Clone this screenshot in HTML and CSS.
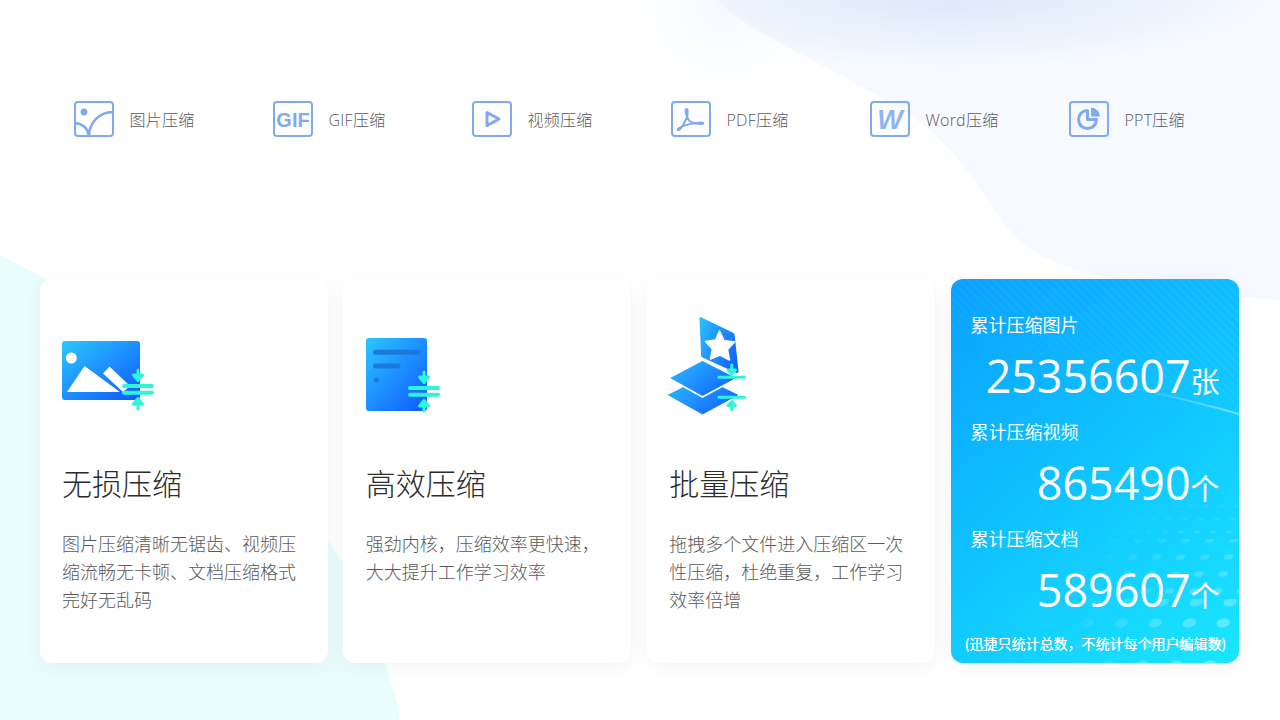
FILE: index.html
```html
<!DOCTYPE html>
<html lang="zh-CN">
<head>
<meta charset="utf-8">
<title>压缩</title>
<link rel="stylesheet" href="styles.css">
</head>
<body>
<svg class="backdrop" viewBox="0 0 1280 720" width="1280" height="720" aria-hidden="true">
  <defs>
    <radialGradient id="skyTop" cx="950" cy="-10" r="320" gradientUnits="userSpaceOnUse" gradientTransform="translate(950 -10) scale(1 .24) translate(-950 10)">
      <stop offset="0" stop-color="#d8e7f8"/>
      <stop offset=".5" stop-color="#e8f0fb"/>
      <stop offset="1" stop-color="#f6f9ff"/>
    </radialGradient>
    <radialGradient id="skyFade" cx="725" cy="0" r="100" gradientUnits="userSpaceOnUse">
      <stop offset="0" stop-color="#f5f9fe"/>
      <stop offset="1" stop-color="#ffffff"/>
    </radialGradient>
  </defs>
  <rect x="600" y="0" width="250" height="120" fill="url(#skyFade)"/>
  <path d="M717 0C745 28 780 42 864 88C900 108 925 122 950 150C975 178 990 205 1007 227C1025 252 1060 268 1109 278C1160 290 1220 296 1280 300V0Z" fill="url(#skyTop)"/>
  <path d="M0 255L45 278L328 540L343 563C365 610 392 670 400 720H0Z" fill="#e9fefc"/>
</svg>

<main class="page">
  <nav class="tools">
    <a class="tool">
      <svg class="tool-icon" viewBox="0 0 40 36"><rect x="1" y="1" width="38" height="34" rx="3" class="ln"/><circle cx="10" cy="11" r="3.4" class="fl"/><path d="M1 22C9 23 14 28 15 35M15 35C15 22 25 11 39 11" class="ln wide"/></svg>
      <span>图片压缩</span>
    </a>
    <a class="tool">
      <svg class="tool-icon" viewBox="0 0 40 36"><rect x="1" y="1" width="38" height="34" rx="3" class="ln"/><text x="20" y="25.500" class="gif">GIF</text></svg>
      <span>GIF压缩</span>
    </a>
    <a class="tool">
      <svg class="tool-icon" viewBox="0 0 40 36"><rect x="1" y="1" width="38" height="34" rx="3" class="ln"/><path d="M15 11.500L27 18L15 24.500Z" class="ln thick"/></svg>
      <span>视频压缩</span>
    </a>
    <a class="tool">
      <svg class="tool-icon" viewBox="0 0 40 36"><rect x="1" y="1" width="38" height="34" rx="3" class="ln"/><path d="M7 29C9 30 13 23 16 16C17 12 17 8 15.500 8C14 8 14.500 12 16 16C18 21 24 23 30 23C33 23 33 21.500 30 21.500C24 21.500 13 24 8 27C6.500 28 6 29 7 29Z" class="ln mid"/></svg>
      <span>PDF压缩</span>
    </a>
    <a class="tool">
      <svg class="tool-icon" viewBox="0 0 40 36"><rect x="1" y="1" width="38" height="34" rx="3" class="ln"/><text x="20" y="28" class="word">W</text></svg>
      <span>Word压缩</span>
    </a>
    <a class="tool">
      <svg class="tool-icon" viewBox="0 0 40 36"><rect x="1" y="1" width="38" height="34" rx="3" class="ln"/><path d="M18.500 9.500A9 9 0 1 0 27.500 18.500H18.500Z" class="ln thick"/><path d="M22 6.500A9.500 9.500 0 0 1 31 15.500H22Z" class="fl"/></svg>
      <span>PPT压缩</span>
    </a>
  </nav>

  <section class="cards">
    <article class="card">
      <svg class="art" viewBox="0 0 100 110">
        <defs>
          <linearGradient id="blue" x1="0" y1="0" x2="1" y2="1">
            <stop offset="0" stop-color="#2cc6ff"/>
            <stop offset="1" stop-color="#0d58ff"/>
          </linearGradient>
          <linearGradient id="blueSoft" x1="0" y1="0" x2="1" y2=".6">
            <stop offset="0" stop-color="#2cc0ff"/>
            <stop offset="1" stop-color="#1468ff"/>
          </linearGradient>
          <linearGradient id="ridge" x1="0" y1="0" x2="1" y2="-.6">
            <stop offset=".85" stop-color="#fff"/>
            <stop offset="1" stop-color="#9fa9c4"/>
          </linearGradient>
          <g id="squeeze">
            <path d="M62 74H90M62 80.700H90" class="sq-bar"/>
            <path d="M76 58V66M71.500 63L76 68.500L80.500 63ZM76 97V89M71.500 92L76 86.500L80.500 92Z" class="sq-arrow"/>
          </g>
        </defs>
        <rect x="0" y="29" width="78" height="59" rx="3" fill="url(#blue)"/>
        <circle cx="9.300" cy="46" r="5.500" fill="#fff"/>
        <path d="M41 61.500L47.500 54.500L68 74L61 80Z" fill="url(#ridge)"/>
        <path d="M5 80L22.500 54L58 80Z" fill="url(#ridge)"/>
        <use href="#squeeze"/>
      </svg>
      <h2>无损压缩</h2>
      <p>图片压缩清晰无锯齿、视频压缩流畅无卡顿、文档压缩格式完好无乱码</p>
    </article>
    <article class="card">
      <svg class="art" viewBox="0 0 100 110">
        <rect x="0" y="26" width="61" height="73" rx="3" fill="url(#blue)"/>
        <path d="M9.500 40.300H52M9.500 54H32" class="doc-line"/>
        <circle cx="10.300" cy="68" r="2.500" fill="#1c78dc"/>
        <use href="#squeeze" x="-18" y="2"/>
      </svg>
      <h2>高效压缩</h2>
      <p>强劲内核，压缩效率更快速，大大提升工作学习效率</p>
    </article>
    <article class="card">
      <svg class="art" viewBox="0 0 100 110">
        <path d="M30.500 6.500C30.500 5.500 31.500 5 32.500 5.500L63.500 20.500C65 21.200 65.500 22 65.700 23.500L69.500 59C69.500 61 68.500 61.500 67 60.800L33.500 45.500C32.500 45 32.200 44.500 32.100 43.500Z" fill="url(#blueSoft)"/>
        <path d="M50.500 19L55 28.500L65.500 30L58.500 37.500L60.500 48L51 43L41.500 47L43.500 37L36.500 29.500L46.500 28Z" fill="#fff" stroke="#fff" stroke-width="1.500" stroke-linejoin="round"/>
        <path d="M-.5 83L33.500 66L68.500 83L33.500 102Z" fill="url(#blueSoft)" stroke="url(#blueSoft)" stroke-linejoin="round"/>
        <path d="M-.5 66L33.500 48L68.500 66L33.500 85Z" fill="url(#blueSoft)" stroke="#fff" stroke-width="1.500" stroke-linejoin="round"/>
        <path d="M49.800 65.300H75.500M49.800 85.300H75.500" class="sq-bar thin"/>
        <path d="M62.800 53V60M59 58L62.800 62L66.500 58ZM62.800 97.500V92M59 93.500L62.800 89.500L66.500 93.500Z" class="sq-arrow"/>
      </svg>
      <h2>批量压缩</h2>
      <p>拖拽多个文件进入压缩区一次性压缩，杜绝重复，工作学习效率倍增</p>
    </article>
    <article class="card stats">
      <div class="stripes"></div>
      <svg class="stat-bg" viewBox="0 0 288 384" aria-hidden="true">
        <defs>
          <pattern id="dotsS" width="16" height="13" patternUnits="userSpaceOnUse" patternTransform="skewX(-18)">
            <ellipse cx="8" cy="6" rx="3" ry="1.500" fill="#fff"/>
          </pattern>
          <pattern id="dotsM" width="24" height="17" patternUnits="userSpaceOnUse" patternTransform="skewX(-18)">
            <ellipse cx="8" cy="6" rx="4.500" ry="3" fill="#fff"/>
          </pattern>
          <pattern id="dotsL" width="34" height="21" patternUnits="userSpaceOnUse" patternTransform="skewX(-18)">
            <ellipse cx="10" cy="8" rx="6.500" ry="4.500" fill="#fff"/>
          </pattern>
          <radialGradient id="dotFade" cx="288" cy="384" r="190" gradientUnits="userSpaceOnUse">
            <stop offset="0" stop-color="#fff" stop-opacity=".4"/>
            <stop offset=".6" stop-color="#fff" stop-opacity=".16"/>
            <stop offset="1" stop-color="#fff" stop-opacity="0"/>
          </radialGradient>
          <mask id="dotMask"><rect width="288" height="384" fill="url(#dotFade)"/></mask>
          <linearGradient id="sweep" x1="0" x2="1" y1="0" y2="0">
            <stop offset="0" stop-color="#fff" stop-opacity="0"/>
            <stop offset="1" stop-color="#fff" stop-opacity=".4"/>
          </linearGradient>
        </defs>
        <g mask="url(#dotMask)">
          <rect x="60" y="190" width="228" height="70" fill="url(#dotsS)"/>
          <rect x="60" y="260" width="228" height="60" fill="url(#dotsM)"/>
          <rect x="60" y="320" width="228" height="64" fill="url(#dotsL)"/>
        </g>
        <path d="M170 106C210 115 250 124 288 135" fill="none" stroke="url(#sweep)" stroke-width="2"/>
      </svg>
      <div class="stat">
        <div class="stat-label">累计压缩图片</div>
        <div class="stat-value"><b>25356607</b><i>张</i></div>
      </div>
      <div class="stat">
        <div class="stat-label">累计压缩视频</div>
        <div class="stat-value"><b>865490</b><i>个</i></div>
      </div>
      <div class="stat">
        <div class="stat-label">累计压缩文档</div>
        <div class="stat-value"><b>589607</b><i>个</i></div>
      </div>
      <div class="stat-note">(迅捷只统计总数，不统计每个用户编辑数)</div>
    </article>
  </section>
</main>
</body>
</html>
```
FILE: styles.css
```css
* { box-sizing: border-box; }
html, body { margin: 0; height: 720px; overflow: hidden; background: #fff; }
body {
  position: relative;
  font-family: "Noto Sans CJK SC", "Open Sans", sans-serif;
  color: #666;
}
.backdrop { position: absolute; inset: 0; }
.page { position: relative; width: 1199px; margin-left: 39.6px; padding-top: 101px; }

.tools { display: flex; padding-left: 34.4px; height: 36px; }
.tool {
  display: flex;
  flex: none;
  align-items: center;
  gap: 15.5px;
  width: 199px;
  font-family: "Open Sans", "Noto Sans CJK SC", sans-serif;
  font-size: 16px;
  font-weight: 300;
  letter-spacing: .25px;
  color: #5a5a5a;
}
.tool-icon { width: 40px; height: 36px; flex: none; }
.ln { fill: none; stroke: #7fa9f0; stroke-width: 2; stroke-linejoin: round; }
.ln.wide { stroke-width: 2.500; }
.ln.thick { stroke-width: 3; }
.ln.mid { stroke-width: 2; }
.fl { fill: #7fa9f0; }
.gif { font: 700 20px "Liberation Sans", sans-serif; letter-spacing: 0; fill: #7fa9f0; text-anchor: middle; }
.word { font: italic 700 27px "Liberation Sans", sans-serif; letter-spacing: 0; fill: #8fb4f3; text-anchor: middle; }

.cards { display: flex; justify-content: space-between; margin-top: 142px; }
.card {
  width: 288px;
  height: 384px;
  padding: 33px 22px 0 22.4px;
  background: #fff;
  border-radius: 12px;
  box-shadow: 0 4px 20px rgba(20, 40, 60, .05);
}
.art { display: block; width: 100px; height: 110px; overflow: visible; }
.sq-bar { stroke: #2ff5d8; stroke-width: 4; stroke-linecap: round; fill: none; }
.sq-bar.thin { stroke-width: 3; }
.sq-arrow { stroke: #2ff5d8; stroke-width: 3; stroke-linecap: round; stroke-linejoin: round; fill: #2ff5d8; }
.doc-line { stroke: #1c78dc; stroke-width: 5; stroke-linecap: round; fill: none; }

.card h2 { margin: 40px 0 0; font-size: 30px; line-height: 40px; font-weight: 300; color: #2c2c2c; }
.card p { margin: 27px 0 0; font-size: 18px; line-height: 28px; font-weight: 300; color: #5a5a5a; }

.stats {
  position: relative;
  display: flex;
  flex-direction: column;
  overflow: hidden;
  padding: 32px 19px 10px 20px;
  color: #fff;
  background: linear-gradient(140deg, #0aa0ff 0%, #10c4ff 50%, #1ae6ff 100%);
  box-shadow: 0 4px 20px rgba(20, 40, 60, .05);
}
.stripes {
  position: absolute;
  left: 0; top: 0; right: 0;
  height: 130px;
  background: repeating-linear-gradient(45deg, rgba(255, 255, 255, .05) 0 2px, transparent 2px 6px);
  -webkit-mask-image: linear-gradient(200deg, #000 30%, transparent 85%);
  mask-image: linear-gradient(200deg, #000 30%, transparent 85%);
}
.stat-bg { position: absolute; left: 0; top: 0; width: 288px; height: 384px; }
.stat { position: relative; height: 107px; }
.stat-label { font-size: 18px; line-height: 26px; }
.stat-value { display: flex; justify-content: flex-end; align-items: baseline; margin-top: 13px; line-height: 52px; }
.stat-value b { font-family: "Open Sans", "Noto Sans CJK SC", sans-serif; font-size: 44.800px; font-weight: 400; }
.stat-value i { font-size: 29px; font-style: normal; }
.stat-note {
  position: relative;
  margin: auto -8px 0 -7px;
  font-size: 14px;
  line-height: 20px;
  text-align: center;
  white-space: nowrap;
  text-shadow: 0 0 .6px #fff;
}
```
